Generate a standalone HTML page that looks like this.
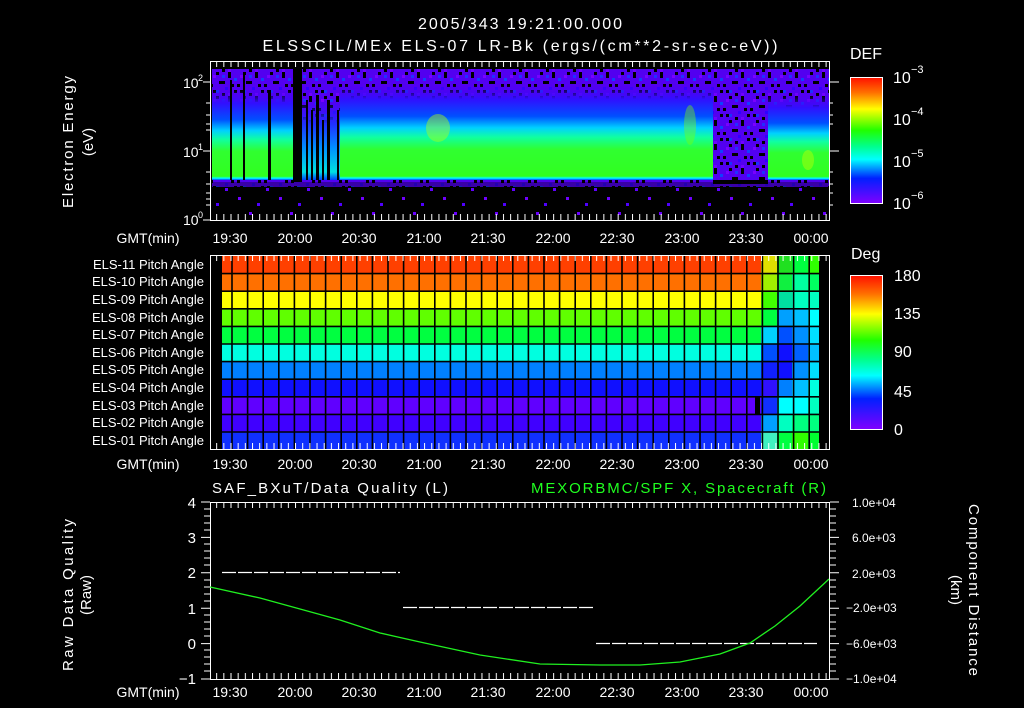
<!DOCTYPE html>
<html><head><meta charset="utf-8"><style>
html,body{margin:0;padding:0;background:#000;}
svg{display:block}
text{font-family:"Liberation Sans",sans-serif;fill:#fff;}
</style></head><body>
<svg width="1024" height="708" viewBox="0 0 1024 708" xmlns="http://www.w3.org/2000/svg">
<defs>
 <linearGradient id="band" x1="0" y1="0" x2="0" y2="1">
  <stop offset="0" stop-color="#4a00f0" stop-opacity="0"/>
  <stop offset="0.15" stop-color="#3010ff"/>
  <stop offset="0.33" stop-color="#0050ff"/>
  <stop offset="0.45" stop-color="#00d0ff"/>
  <stop offset="0.55" stop-color="#10ffa0"/>
  <stop offset="0.68" stop-color="#30ff30"/>
  <stop offset="0.96" stop-color="#30ff20"/>
  <stop offset="0.98" stop-color="#00ffff"/>
  <stop offset="1" stop-color="#0040ff"/>
 </linearGradient>
 <linearGradient id="bandw" x1="0" y1="0" x2="0" y2="1">
  <stop offset="0" stop-color="#3010ff" stop-opacity="0"/>
  <stop offset="0.3" stop-color="#2030ff"/>
  <stop offset="0.6" stop-color="#0090ff"/>
  <stop offset="0.9" stop-color="#00e0e0"/>
  <stop offset="1" stop-color="#0040ff"/>
 </linearGradient>
 <linearGradient id="cdef" x1="0" y1="0" x2="0" y2="1">
  <stop offset="0" stop-color="#ff1000"/>
  <stop offset="0.12" stop-color="#ff7000"/>
  <stop offset="0.25" stop-color="#ffff00"/>
  <stop offset="0.42" stop-color="#20ff00"/>
  <stop offset="0.55" stop-color="#00ff90"/>
  <stop offset="0.65" stop-color="#00ffff"/>
  <stop offset="0.80" stop-color="#0020ff"/>
  <stop offset="1" stop-color="#8000ff"/>
 </linearGradient>
 <pattern id="spk" x="0" y="0" width="27" height="24" patternUnits="userSpaceOnUse">
  <rect width="27" height="24" fill="#5200f0"/>
  <rect x="0" y="0" width="3" height="3" fill="#000"/><rect x="6" y="3" width="3" height="3" fill="#2030ff"/>
  <rect x="12" y="0" width="3" height="6" fill="#000"/><rect x="18" y="6" width="3" height="3" fill="#1040ff"/>
  <rect x="3" y="9" width="6" height="3" fill="#000"/><rect x="21" y="12" width="3" height="3" fill="#000"/>
  <rect x="9" y="15" width="3" height="3" fill="#3000ff"/><rect x="15" y="12" width="3" height="3" fill="#000"/>
  <rect x="0" y="18" width="3" height="3" fill="#1a30ff"/><rect x="24" y="18" width="3" height="3" fill="#000"/>
  <rect x="12" y="21" width="3" height="3" fill="#7000ff"/><rect x="18" y="18" width="3" height="3" fill="#000"/>
  <rect x="24" y="3" width="3" height="3" fill="#7a00ff"/><rect x="6" y="21" width="3" height="3" fill="#000"/>
 </pattern>
 <pattern id="spk2" x="0" y="0" width="41" height="30" patternUnits="userSpaceOnUse">
  <rect x="3" y="2" width="3" height="3" fill="#6a00ff"/><rect x="20" y="8" width="3" height="3" fill="#6000ff"/>
  <rect x="33" y="17" width="3" height="3" fill="#7000ff"/><rect x="11" y="23" width="3" height="3" fill="#5000ff"/>
 </pattern>
 <pattern id="tkx" x="230.5" y="0" width="7.17" height="708" patternUnits="userSpaceOnUse">
  <rect x="0" y="0" width="1" height="708" fill="#fff"/>
 </pattern>
</defs>

<text x="520" y="29" font-size="16" text-anchor="middle" textLength="204">2005/343 19:21:00.000</text>
<text x="520" y="51" font-size="16" text-anchor="middle" textLength="515">ELSSCIL/MEx ELS-07 LR-Bk  (ergs/(cm**2-sr-sec-eV))</text>

<!-- Panel 1 -->
<rect x="212" y="69" width="617" height="113" fill="url(#spk)"/>
<rect x="212" y="182" width="617" height="5" fill="url(#spk)" opacity="0.7"/>
<rect x="212" y="187" width="617" height="31" fill="url(#spk2)"/>
<rect x="212" y="90" width="81" height="90" fill="url(#band)"/>
<rect x="293" y="100" width="47" height="80" fill="url(#bandw)"/>
<rect x="340" y="85" width="373" height="95" fill="url(#band)"/>
<rect x="768" y="95" width="61" height="85" fill="url(#band)"/>
<rect x="713" y="180" width="55" height="4" fill="#000"/>
<ellipse cx="438" cy="128" rx="12" ry="14" fill="#b0ff10" opacity="0.45"/>
<ellipse cx="690" cy="125" rx="6" ry="20" fill="#80ff00" opacity="0.4"/>
<ellipse cx="808" cy="160" rx="6" ry="10" fill="#d0ff00" opacity="0.4"/>
<g fill="#000">
<rect x="230" y="80" width="2" height="100"/><rect x="243" y="75" width="2" height="105"/>
<rect x="268" y="90" width="3" height="90"/><rect x="293" y="69" width="9" height="113"/>
<rect x="306" y="100" width="2" height="80"/><rect x="311" y="110" width="2" height="70"/>
<rect x="316" y="95" width="3" height="85"/><rect x="322" y="120" width="2" height="60"/>
<rect x="327" y="100" width="3" height="80"/><rect x="337" y="110" width="2" height="70"/>
</g>
<rect x="210.5" y="61.5" width="619" height="159" fill="none" stroke="#fff"/>
<rect x="211" y="62" width="618" height="5" fill="url(#tkx)"/>
<rect x="211" y="214" width="618" height="6" fill="url(#tkx)"/>
<g stroke="#fff">
<path d="M210 82h-7M210 151h-7M210 220h-7M829 82h10M829 151h10"/>
<path d="M210 103h-4M210 115h-4M210 124h-4M210 130h-4M210 172h-4M210 184h-4M210 193h-4M210 199h-4M210 205h-4"/>
<path d="M829 103h4M829 115h4M829 124h4M829 172h4M829 184h4M829 193h4M829 205h4"/>
</g>
<text x="183" y="88" font-size="14">10</text><text x="198" y="81" font-size="9">2</text>
<text x="183" y="157" font-size="14">10</text><text x="198" y="150" font-size="9">1</text>
<text x="183" y="225" font-size="14">10</text><text x="198" y="218" font-size="9">0</text>
<text transform="translate(73,142) rotate(-90)" font-size="15" text-anchor="middle" textLength="132">Electron Energy</text>
<text transform="translate(93,142) rotate(-90)" font-size="15" text-anchor="middle">(eV)</text>
<text x="850" y="59" font-size="16">DEF</text>
<rect x="850.5" y="77.5" width="32" height="126" fill="url(#cdef)" stroke="#fff"/>
<text x="893" y="83" font-size="16">10</text><text x="911" y="73" font-size="11">−3</text>
<text x="893" y="125" font-size="16">10</text><text x="911" y="115" font-size="11">−4</text>
<text x="893" y="167" font-size="16">10</text><text x="911" y="157" font-size="11">−5</text>
<text x="893" y="209" font-size="16">10</text><text x="911" y="199" font-size="11">−6</text>

<g font-size="14" text-anchor="middle">
<text x="148" y="243">GMT(min)</text>
<text x="230" y="243">19:30</text><text x="295" y="243">20:00</text><text x="359" y="243">20:30</text><text x="424" y="243">21:00</text><text x="488" y="243">21:30</text><text x="553" y="243">22:00</text><text x="617" y="243">22:30</text><text x="682" y="243">23:00</text><text x="746" y="243">23:30</text><text x="811" y="243">00:00</text>
<text x="148" y="469">GMT(min)</text>
<text x="230" y="469">19:30</text><text x="295" y="469">20:00</text><text x="359" y="469">20:30</text><text x="424" y="469">21:00</text><text x="488" y="469">21:30</text><text x="553" y="469">22:00</text><text x="617" y="469">22:30</text><text x="682" y="469">23:00</text><text x="746" y="469">23:30</text><text x="811" y="469">00:00</text>
<text x="148" y="697">GMT(min)</text>
<text x="230" y="697">19:30</text><text x="295" y="697">20:00</text><text x="359" y="697">20:30</text><text x="424" y="697">21:00</text><text x="488" y="697">21:30</text><text x="553" y="697">22:00</text><text x="617" y="697">22:30</text><text x="682" y="697">23:00</text><text x="746" y="697">23:30</text><text x="811" y="697">00:00</text>
</g>

<!-- Panel 2 -->
<g>
<rect x="222" y="256" width="541" height="17.6" fill="#ff4000"/>
<rect x="222" y="273.6" width="541" height="17.6" fill="#ff7000"/>
<rect x="222" y="291.2" width="541" height="17.6" fill="#ffff00"/>
<rect x="222" y="308.8" width="541" height="17.6" fill="#60ff00"/>
<rect x="222" y="326.4" width="541" height="17.6" fill="#00ff40"/>
<rect x="222" y="344" width="541" height="17.6" fill="#00ffe0"/>
<rect x="222" y="361.6" width="541" height="17.6" fill="#0080ff"/>
<rect x="222" y="379.2" width="541" height="17.6" fill="#1010ff"/>
<rect x="222" y="396.8" width="541" height="17.6" fill="#6000ff"/>
<rect x="222" y="414.4" width="541" height="17.6" fill="#4000ff"/>
<rect x="222" y="432" width="541" height="17" fill="#1030ff"/>
<rect x="761" y="256" width="16" height="17.6" fill="#e0e000"/>
<rect x="761" y="273.6" width="16" height="17.6" fill="#a0f000"/>
<rect x="761" y="291.2" width="16" height="17.6" fill="#40ff00"/>
<rect x="761" y="308.8" width="16" height="17.6" fill="#00ff40"/>
<rect x="761" y="326.4" width="16" height="17.6" fill="#00d0ff"/>
<rect x="761" y="344" width="16" height="17.6" fill="#0050ff"/>
<rect x="761" y="361.6" width="16" height="17.6" fill="#1020ff"/>
<rect x="761" y="379.2" width="16" height="17.6" fill="#3010ff"/>
<rect x="761" y="396.8" width="16" height="17.6" fill="#1030ff"/>
<rect x="761" y="414.4" width="16" height="17.6" fill="#00a0ff"/>
<rect x="761" y="432" width="16" height="17" fill="#40f0c0"/>
<rect x="777" y="256" width="15" height="17.6" fill="#20e020"/>
<rect x="777" y="273.6" width="15" height="17.6" fill="#10f040"/>
<rect x="777" y="291.2" width="15" height="17.6" fill="#00e0a0"/>
<rect x="777" y="308.8" width="15" height="17.6" fill="#00a0ff"/>
<rect x="777" y="326.4" width="15" height="17.6" fill="#0050ff"/>
<rect x="777" y="344" width="15" height="17.6" fill="#1010ff"/>
<rect x="777" y="361.6" width="15" height="17.6" fill="#1010ff"/>
<rect x="777" y="379.2" width="15" height="17.6" fill="#0080ff"/>
<rect x="777" y="396.8" width="15" height="17.6" fill="#00ffff"/>
<rect x="777" y="414.4" width="15" height="17.6" fill="#00ffc0"/>
<rect x="777" y="432" width="15" height="17" fill="#00ff40"/>
<rect x="792" y="256" width="16" height="17.6" fill="#00ff40"/>
<rect x="792" y="273.6" width="16" height="17.6" fill="#00ffa0"/>
<rect x="792" y="291.2" width="16" height="17.6" fill="#00ffc0"/>
<rect x="792" y="308.8" width="16" height="17.6" fill="#00c0ff"/>
<rect x="792" y="326.4" width="16" height="17.6" fill="#0090ff"/>
<rect x="792" y="344" width="16" height="17.6" fill="#0060ff"/>
<rect x="792" y="361.6" width="16" height="17.6" fill="#0090ff"/>
<rect x="792" y="379.2" width="16" height="17.6" fill="#00c0ff"/>
<rect x="792" y="396.8" width="16" height="17.6" fill="#00ffff"/>
<rect x="792" y="414.4" width="16" height="17.6" fill="#00ff80"/>
<rect x="792" y="432" width="16" height="17" fill="#30ff00"/>
<rect x="808" y="256" width="11" height="17.6" fill="#30ff00"/>
<rect x="808" y="273.6" width="11" height="17.6" fill="#00ff60"/>
<rect x="808" y="291.2" width="11" height="17.6" fill="#00ffc0"/>
<rect x="808" y="308.8" width="11" height="17.6" fill="#00ffff"/>
<rect x="808" y="326.4" width="11" height="17.6" fill="#00e0ff"/>
<rect x="808" y="344" width="11" height="17.6" fill="#00c0ff"/>
<rect x="808" y="361.6" width="11" height="17.6" fill="#00e0ff"/>
<rect x="808" y="379.2" width="11" height="17.6" fill="#00ffe0"/>
<rect x="808" y="396.8" width="11" height="17.6" fill="#00ffc0"/>
<rect x="808" y="414.4" width="11" height="17.6" fill="#00ff80"/>
<rect x="808" y="432" width="11" height="17" fill="#00ff30"/>
<rect x="755" y="396.8" width="5" height="17.6" fill="#000"/>
</g>
<g stroke="#000" stroke-width="1.6">
<path d="M222 273.6H819M222 291.2H819M222 308.8H819M222 326.4H819M222 344H819M222 361.6H819M222 379.2H819M222 396.8H819M222 414.4H819M222 432H819"/>
<path d="M232 256V449M247.6 256V449M263.2 256V449M278.8 256V449M294.4 256V449M310 256V449M325.6 256V449M341.2 256V449M356.8 256V449M372.4 256V449M388 256V449M403.6 256V449M419.2 256V449M434.8 256V449M450.4 256V449M466 256V449M481.6 256V449M497.2 256V449M512.8 256V449M528.4 256V449M544 256V449M559.6 256V449M575.2 256V449M590.8 256V449M606.4 256V449M622 256V449M637.6 256V449M653.2 256V449M668.8 256V449M684.4 256V449M700 256V449M715.6 256V449M731.2 256V449M746.8 256V449M762.4 256V449M778 256V449M793.6 256V449M809.2 256V449"/>
</g>
<rect x="210.5" y="255.5" width="619" height="194" fill="none" stroke="#fff"/>
<rect x="211" y="256" width="618" height="5" fill="url(#tkx)"/>
<rect x="211" y="443" width="618" height="6" fill="url(#tkx)"/>
<g font-size="13" text-anchor="end">
<text x="204" y="269">ELS-11 Pitch Angle</text>
<text x="204" y="286">ELS-10 Pitch Angle</text>
<text x="204" y="304">ELS-09 Pitch Angle</text>
<text x="204" y="322">ELS-08 Pitch Angle</text>
<text x="204" y="339">ELS-07 Pitch Angle</text>
<text x="204" y="357">ELS-06 Pitch Angle</text>
<text x="204" y="374">ELS-05 Pitch Angle</text>
<text x="204" y="392">ELS-04 Pitch Angle</text>
<text x="204" y="410">ELS-03 Pitch Angle</text>
<text x="204" y="427">ELS-02 Pitch Angle</text>
<text x="204" y="445">ELS-01 Pitch Angle</text>
</g>
<text x="851" y="259" font-size="16">Deg</text>
<rect x="850.5" y="275.5" width="32" height="154" fill="url(#cdef)" stroke="#fff"/>
<g font-size="16"><text x="894" y="281">180</text><text x="894" y="319">135</text><text x="894" y="357">90</text><text x="894" y="397">45</text><text x="894" y="435">0</text></g>

<!-- Panel 3 -->
<text x="212" y="493" font-size="15" textLength="236">SAF_BXuT/Data Quality (L)</text>
<text x="826" y="493" font-size="15" text-anchor="end" style="fill:#20ff20" textLength="295">MEXORBMC/SPF X, Spacecraft (R)</text>
<rect x="210.5" y="502.5" width="619" height="177" fill="none" stroke="#fff"/>
<rect x="211" y="503" width="618" height="5" fill="url(#tkx)"/>
<rect x="211" y="673" width="618" height="6" fill="url(#tkx)"/>
<g stroke="#fff">
<path d="M210 502h-9M210 537.4h-9M210 572.8h-9M210 608.2h-9M210 643.6h-9M210 679h-9"/>
<path d="M210 509h-6M210 516h-6M210 523h-6M210 530h-6M210 544h-6M210 551h-6M210 558h-6M210 565h-6M210 580h-6M210 587h-6M210 594h-6M210 601h-6M210 615h-6M210 622h-6M210 629h-6M210 636h-6M210 650h-6M210 657h-6M210 664h-6M210 671h-6"/>
<path d="M830 502h9M830 537.4h9M830 572.8h9M830 608.2h9M830 643.6h9M830 679h9"/>
<path d="M830 509h6M830 516h6M830 523h6M830 530h6M830 544h6M830 551h6M830 558h6M830 565h6M830 580h6M830 587h6M830 594h6M830 601h6M830 615h6M830 622h6M830 629h6M830 636h6M830 650h6M830 657h6M830 664h6M830 671h6"/>
</g>
<g font-size="15" text-anchor="end"><text x="196" y="508">4</text><text x="196" y="543">3</text><text x="196" y="578">2</text><text x="196" y="614">1</text><text x="196" y="649">0</text><text x="196" y="684">−1</text></g>
<g font-size="12"><text x="852" y="507">1.0e+04</text><text x="852" y="542">6.0e+03</text><text x="852" y="578">2.0e+03</text><text x="846" y="612">−2.0e+03</text><text x="846" y="648">−6.0e+03</text><text x="846" y="683">−1.0e+04</text></g>
<g stroke="#fff" stroke-width="1.2" stroke-dasharray="14 2">
<path d="M222 572.5H400"/><path d="M403 607.5H595"/><path d="M596 643.5H817"/>
</g>
<polyline fill="none" stroke="#20f020" stroke-width="1.3" points="210,587 260,598 300,609 340,620 380,633 420,642 480,655 540,664 600,665 640,665 680,662 720,654 750,643 775,626 800,606 829,579"/>
<text transform="translate(73,595) rotate(-90)" font-size="15" text-anchor="middle" textLength="152">Raw Data Quality</text>
<text transform="translate(91,595) rotate(-90)" font-size="15" text-anchor="middle">(Raw)</text>
<text transform="translate(969,590) rotate(90)" font-size="15" text-anchor="middle" textLength="172">Component Distance</text>
<text transform="translate(951,590) rotate(90)" font-size="15" text-anchor="middle">(km)</text>
</svg>
</body></html>
